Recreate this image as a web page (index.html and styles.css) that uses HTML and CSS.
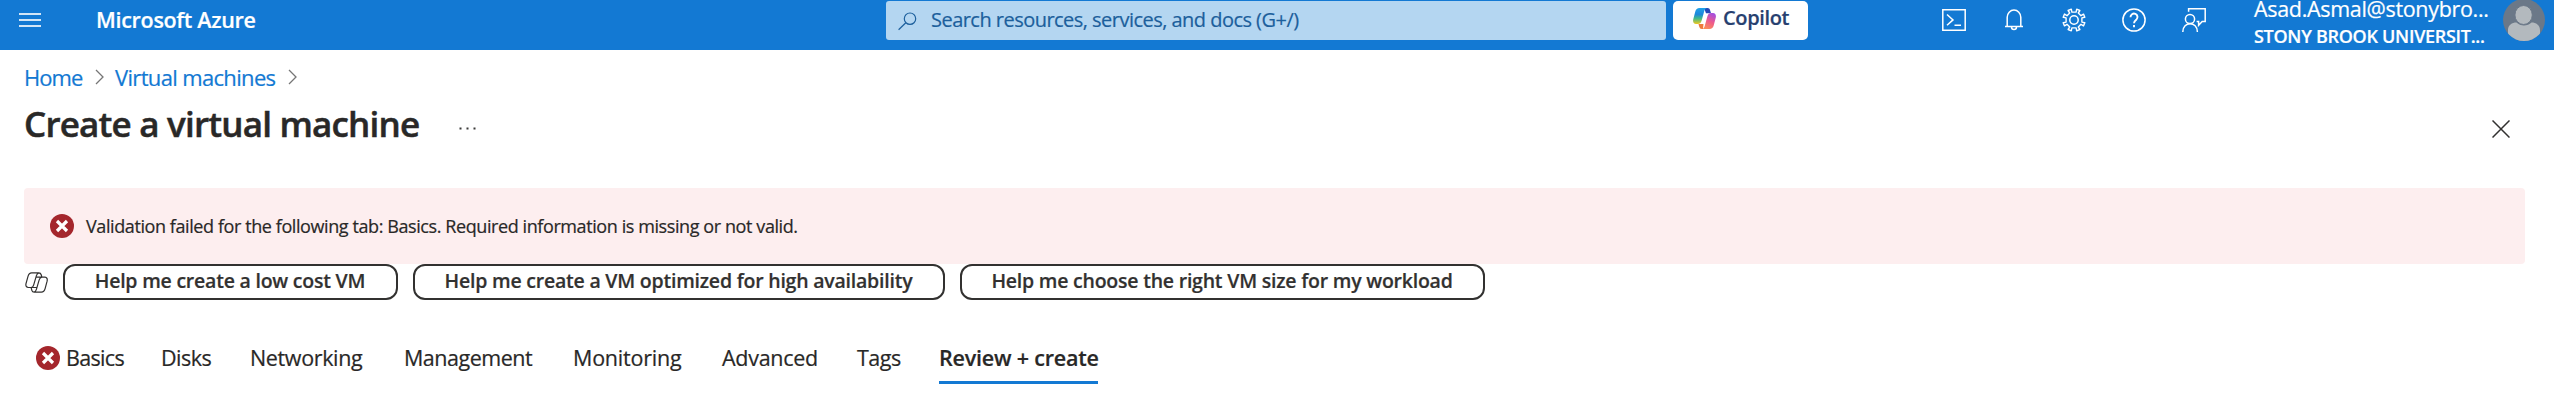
FILE: index.html
```
<!DOCTYPE html>
<html lang="en">
<head>
<meta charset="utf-8">
<title>Create a virtual machine - Microsoft Azure</title>
<link rel="stylesheet" href="styles.css">
</head>
<body>
<svg width="0" height="0" class="defs" aria-hidden="true">
  <defs>
    <linearGradient id="cool" x1="0" y1="0" x2="0" y2="1">
      <stop offset="0" stop-color="#1fa2e8"/><stop offset=".4" stop-color="#1c86dc"/><stop offset=".65" stop-color="#3fb98a"/><stop offset="1" stop-color="#f2c81e"/>
    </linearGradient>
    <linearGradient id="warm" x1=".7" y1="0" x2=".3" y2="1">
      <stop offset="0" stop-color="#a44fe0"/><stop offset=".5" stop-color="#ee5a8c"/><stop offset="1" stop-color="#fb8f56"/>
    </linearGradient>
    <symbol id="error" viewBox="0 0 24 24">
      <circle cx="12" cy="12" r="12" fill="#a4262c"/>
      <path d="M7 7l10 10M17 7L7 17" stroke="#fff" stroke-width="3.2" fill="none"/>
    </symbol>
  </defs>
</svg>
<header class="topbar">
  <svg class="menu" viewBox="0 0 22 14"><path d="M0 1h22M0 7h22M0 13h22" stroke="#d3e6f7" stroke-width="1.8"/></svg>
  <div class="brand">Microsoft Azure</div>
  <div class="search">
    <svg class="search-icon" viewBox="0 0 19 19"><circle cx="12" cy="6.7" r="5.7"/><path d="M7.8 10.8L.6 17.8"/></svg>
    <span>Search resources, services, and docs (G+/)</span>
  </div>
  <div class="copilot">
    <svg class="copilot-logo" viewBox="0 0 23 21">
      <path d="M11 0h3.500c1.500 0 2.200.8 2.600 2.200l.9 3H13z" fill="#2348b8"/>
      <path d="M6.500 0H14c-1.600.3-2.300 1.500-2.800 3.300L8.800 12c-.7 2.500-1.700 4-4 4H3C.6 16-.3 14 .2 11.400L2.300 3.500C2.900 1.200 4.200 0 6.500 0z" fill="url(#cool)"/>
      <path d="M5.500 16h5l-.5 5H9c-1.700 0-2.300-.8-2.800-2.500z" fill="#ef7a3b"/>
      <path d="M16.500 21H9c1.600-.3 2.300-1.500 2.800-3.300L14.200 9c.7-2.500 1.700-4 4-4H20c2.400 0 3.300 2 2.800 4.600l-2.100 7.900C20.100 19.800 18.800 21 16.500 21z" fill="url(#warm)"/>
    </svg>
    <span>Copilot</span>
  </div>
  <nav class="tools">
    <svg viewBox="0 0 24 24"><path d="M.8 1.800h22.400v20.400H.8zM5 6.500l6 5.400-6 5.400M12.500 17.300h6.500"/></svg>
    <svg viewBox="0 0 24 24"><path d="M3 18.500h18M5.200 18.500V9.300a6.800 7.300 0 0 1 13.600 0v9.200M9.500 19c0 3.300 5 3.300 5 0"/></svg>
    <svg viewBox="0 0 24 24"><circle cx="12" cy="12" r="4.200"/><path d="M9.900 4.100L9.300 1.200 6.100 2.500 7.700 5 5 7.700 2.500 6.100 1.200 9.300l2.900.6v4.200l-2.900.6 1.300 3.200L5 16.300 7.700 19l-1.600 2.500 3.200 1.300.6-2.900h4.200l.6 2.900 3.200-1.300-1.600-2.500 2.700-2.700 2.500 1.600 1.300-3.200-2.900-.6V9.900l2.900-.6-1.300-3.200L19 7.700 16.300 5l1.600-2.500-3.200-1.300-.6 2.900z" stroke-linejoin="round" stroke-width="1.400"/></svg>
    <svg viewBox="0 0 24 24"><circle cx="12" cy="12" r="11.100"/><path d="M8.500 9.200a3.500 3.500 0 1 1 5.800 2.500c-1.500 1.200-2.300 1.800-2.300 3.600M12 17v2.200" stroke-width="1.900"/></svg>
    <svg viewBox="0 0 24 24"><circle cx="8" cy="11" r="4.600"/><path d="M.8 24c0-11 14.600-11 14.600 0M6.600 3.700V.8h16.600v12.700h-3l-3.600 3.800v-3.800h-2"/></svg>
  </nav>
  <div class="account">
    <div class="user">Asad.Asmal@stonybro...</div>
    <div class="tenant">STONY BROOK UNIVERSIT...</div>
  </div>
  <svg class="avatar" viewBox="0 0 42 42">
    <clipPath id="round"><circle cx="21" cy="21" r="21"/></clipPath>
    <g clip-path="url(#round)"><path d="M0 0h42v42H0z" fill="#6b7888"/><path d="M5 42V31c0-5 4-7.500 8.500-7.500 4 4 11 4 15 0C33 23.500 37 26 37 31v11z" fill="#b3b9be"/><ellipse cx="20.600" cy="16" rx="8.700" ry="9.500" fill="#b3b9be" stroke="#6b7888" stroke-width="1"/></g>
  </svg>
</header>
<main>
  <nav class="crumbs">
    <a class="home">Home</a>
    <svg class="chevron" viewBox="0 0 9 16"><path d="M1 1l7 7-7 7"/></svg>
    <a class="vms">Virtual machines</a>
    <svg class="chevron" viewBox="0 0 9 16"><path d="M1 1l7 7-7 7"/></svg>
  </nav>
  <div class="heading">
    <h1>Create a virtual machine</h1>
    <svg class="more" viewBox="0 0 17 3"><path d="M.5.500h2v2h-2zM7.500.500h2v2h-2zM14.500.500h2v2h-2z"/></svg>
    <svg class="close" viewBox="0 0 18 18"><path d="M.5.500l17 17M17.500.500l-17 17"/></svg>
  </div>
  <div class="banner">
    <svg class="status"><use href="#error"/></svg>
    <span>Validation failed for the following tab: Basics. Required information is missing or not valid.</span>
  </div>
  <div class="prompts">
    <svg class="copilot-line" viewBox="0 0 23 21">
      <path d="M6.700.8h7.200c1.400 0 1.900.7 2.300 2l.7 2.400H20c1.900 0 2.600 1.800 2.100 4l-2 7.500c-.6 2.200-1.700 3.500-3.700 3.500H9.200c-1.500 0-2-.7-2.400-2L6.100 15.500H3.400c-2 0-2.900-1.600-2.400-3.900l2-7.300C3.600 2 4.700.8 6.700.8zM13.900.8c-1.600.2-2 1.200-2.500 2.900L8.700 12.900c-.5 1.700-1.200 2.600-2.700 2.600M16.900 5.200c-1.600.2-2.300 1.200-2.800 2.900l-2.700 9.200c-.5 1.700-1.100 2.700-2.500 2.900M11 5.200h6M6 15.500h6"/>
    </svg>
    <button class="low-cost">Help me create a low cost VM</button>
    <button class="availability">Help me create a VM optimized for high availability</button>
    <button class="vm-size">Help me choose the right VM size for my workload</button>
  </div>
  <nav class="tabs">
    <svg class="status"><use href="#error"/></svg>
    <a class="basics">Basics</a>
    <a class="disks">Disks</a>
    <a class="networking">Networking</a>
    <a class="management">Management</a>
    <a class="monitoring">Monitoring</a>
    <a class="advanced">Advanced</a>
    <a class="tags">Tags</a>
    <a class="review">Review + create</a>
  </nav>
</main>
</body>
</html>
```

FILE: styles.css
```
* { box-sizing: border-box; }
body {
  margin: 0;
  background: #fff;
  color: #292827;
  font-family: "Open Sans", "Noto Sans", sans-serif;
  white-space: nowrap;
  overflow: hidden;
  -webkit-text-stroke: 0.2px currentColor;
}
svg { display: block; flex: none; fill: none; }

.topbar {
  display: flex;
  align-items: flex-start;
  height: 50px;
  background: #1379d3;
  color: #fff;
}
.menu { width: 22px; height: 14px; margin: 13px 0 0 19px; }
.brand {
  width: 790px;
  margin-left: 55px;
  font-size: 21.5px;
  font-weight: 600;
  letter-spacing: -0.3px;
  line-height: 39px;
}
.search {
  display: flex;
  width: 780px;
  height: 39px;
  margin-top: 1px;
  padding-left: 12px;
  gap: 14px;
  border-radius: 3px;
  background: #b4d6f1;
  color: #1c5f9c;
  font-size: 20px;
  letter-spacing: -0.53px;
  line-height: 37px;
}
.search-icon { width: 19px; height: 19px; margin-top: 11px; stroke: #1c5f9c; stroke-width: 1.2; }
.copilot {
  display: flex;
  width: 135px;
  height: 39px;
  margin: 1px 0 0 7px;
  padding-left: 20px;
  gap: 7px;
  border-radius: 5px;
  background: #fff;
  color: #27406f;
  font-size: 20px;
  font-weight: 600;
  letter-spacing: -0.37px;
  line-height: 33px;
}
.copilot-logo { width: 23px; height: 21px; margin-top: 7px; }
.tools { display: flex; gap: 36px; margin: 8px 0 0 134px; }
.tools svg { width: 24px; height: 24px; stroke: #fff; stroke-width: 1.5; }
.account { width: 249px; margin-left: 48px; }
.user { height: 22px; font-size: 21.5px; line-height: 18px; letter-spacing: -0.32px; }
.tenant { font-size: 18px; font-weight: 600; line-height: 28px; letter-spacing: -0.29px; }
.avatar { width: 42px; height: 42px; margin-top: -1px; }

main { padding: 0 29px 0 24px; }
.crumbs {
  display: flex;
  align-items: center;
  height: 54px;
  color: #1379d3;
  font-size: 22px;
}
.home { width: 71px; letter-spacing: -0.94px; }
.vms { width: 173px; margin-left: 11px; letter-spacing: -0.66px; }
.chevron { width: 9px; height: 16px; stroke: #767676; stroke-width: 1.3; }
.heading { display: flex; align-items: center; height: 84px; padding-bottom: 44px; }
h1 {
  width: 435px;
  margin: 0;
  font-size: 35px;
  font-weight: 600;
  letter-spacing: -0.8px;
  line-height: 40px;
  -webkit-text-stroke: 0.5px currentColor;
}
.more { width: 17px; height: 3px; margin-top: 8px; fill: #3b3a39; }
.close { width: 18px; height: 18px; margin: 9px 15px 0 auto; stroke: #323130; stroke-width: 1.5; }

.banner {
  display: flex;
  align-items: center;
  height: 76px;
  padding-left: 26px;
  gap: 12px;
  border-radius: 4px;
  background: #fdeeef;
  font-size: 18px;
  letter-spacing: -0.41px;
}
.status { width: 24px; height: 24px; }

.prompts { display: flex; align-items: center; height: 36px; }
.copilot-line { width: 23px; height: 21px; margin: 0 15px 0 1px; stroke: #323130; stroke-width: 1.2; }
.prompts button {
  height: 36px;
  margin: 0 15px 0 0;
  padding: 0 1px 2px 0;
  border: 2px solid #323130;
  border-radius: 12px;
  background: #fff;
  color: #323130;
  font: 600 19.5px/30px "Open Sans", "Noto Sans", sans-serif;
  letter-spacing: -0.22px;
}
.prompts .low-cost { width: 335px; }
.prompts .availability { width: 532px; }
.prompts .vm-size { width: 525px; }

.tabs {
  display: flex;
  align-items: center;
  height: 52px;
  margin-top: 32px;
  padding-left: 12px;
  font-size: 21.5px;
  line-height: 46px;
}
.basics { width: 95px; margin-left: 6px; letter-spacing: -0.66px; }
.disks { width: 89px; letter-spacing: -0.52px; }
.networking { width: 154px; letter-spacing: -0.36px; }
.management { width: 169px; letter-spacing: -0.48px; }
.monitoring { width: 149px; letter-spacing: -0.21px; }
.advanced { width: 135px; letter-spacing: -0.28px; }
.tags { width: 82px; letter-spacing: -0.49px; }
.review {
  width: 159px;
  height: 52px;
  border-bottom: 3px solid #1379d3;
  font-weight: 600;
  letter-spacing: -0.2px;
  line-height: 51px;
}
```
